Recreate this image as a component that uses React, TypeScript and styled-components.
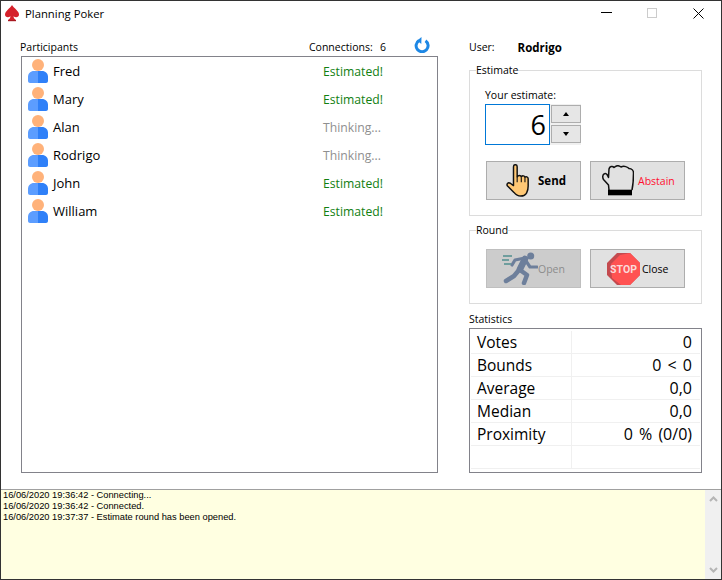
import React from "react";
import styled, { createGlobalStyle } from "styled-components";

const GlobalStyle = createGlobalStyle`
  html, body {
    margin: 0;
    padding: 0;
    background: #fff;
  }
  * {
    box-sizing: border-box;
  }
`;

const Window = styled.div`
  display: flex;
  flex-direction: column;
  width: 722px;
  height: 580px;
  overflow: hidden;
  background: #fff;
  border: 1px solid #333;
  color: #000;
  font-family: "Open Sans", "Noto Sans", sans-serif;
  font-size: 10.5px;
`;

const TitleBar = styled.div`
  display: flex;
  align-items: center;
  height: 24px;
  padding-left: 3px;
  flex-shrink: 0;
`;

const AppTitle = styled.span`
  margin-left: 5px;
  font-size: 11.3px;
  flex: 1;
`;

const WinButton = styled.div`
  display: flex;
  align-items: center;
  justify-content: center;
  width: 46px;
  height: 24px;
`;

const Main = styled.div`
  display: flex;
  flex: 1;
  min-height: 0;
  gap: 31px;
  padding: 13px 19px 16px 19px;
`;

const LeftColumn = styled.div`
  display: flex;
  flex-direction: column;
  width: 418px;
`;

const RightColumn = styled.div`
  display: flex;
  flex-direction: column;
  width: 233px;
`;

const HeaderRow = styled.div`
  display: flex;
  align-items: center;
  height: 18px;
  flex-shrink: 0;
`;

const Connections = styled.span`
  margin-left: auto;
  width: 71px;
`;

const ConnectionCount = styled.span`
  width: 34px;
`;

const RefreshSlot = styled.span`
  display: flex;
  width: 24px;
  margin-bottom: 4px;
`;

const ParticipantList = styled.div`
  flex: 1;
  margin-left: 1px;
  border: 1px solid #82828a;
`;

const ParticipantRow = styled.div`
  display: flex;
  align-items: center;
  height: 28px;
  padding-left: 6px;
  font-size: 13px;
`;

const Name = styled.span`
  width: 270px;
  margin-left: 5px;
`;

const Status = styled.span<{ $done: boolean }>`
  color: ${(p) => (p.$done ? "#118011" : "#8f8f8f")};
  font-size: 12.2px;
`;

const UserRow = styled(HeaderRow)`
  margin-bottom: 6px;
`;

const UserName = styled.span`
  margin-left: 23px;
  font-size: 11.5px;
  font-weight: 700;
`;

const Group = styled.fieldset<{ $height: number }>`
  height: ${(p) => p.$height}px;
  margin: 0 0 6px;
  padding: 0 15px;
  width: 233px;
  border: 1px solid #dcdcdc;
`;

const GroupLegend = styled.legend`
  padding: 0;
  margin-left: -9px;
  font-size: 10.5px;
  line-height: 16px;
`;

const EstimateLabel = styled.div`
  margin-top: 9px;
  line-height: 16px;
`;

const SpinRow = styled.div`
  display: flex;
  margin-top: 1px;
`;

const SpinInput = styled.div`
  display: flex;
  align-items: center;
  justify-content: flex-end;
  width: 65px;
  height: 41px;
  padding-right: 3px;
  border: 1px solid #0078d7;
  font-size: 27px;
`;

const SpinButtons = styled.div`
  display: flex;
  flex-direction: column;
  gap: 2px;
  padding: 1px 0 1px 1px;
  background: #f0f0f0;
`;

const SpinButton = styled.div`
  display: flex;
  align-items: center;
  justify-content: center;
  width: 30px;
  height: 18px;
  background: #e6e6e6;
  border: 1px solid #adadad;
`;

const ButtonRow = styled.div<{ $top: number }>`
  display: flex;
  gap: 9px;
  margin-top: ${(p) => p.$top}px;
  padding-left: 1px;
`;

const ActionButton = styled.div<{ $disabled?: boolean; $pad: number; $gap: number }>`
  display: flex;
  align-items: center;
  width: 95px;
  height: 39px;
  padding-left: ${(p) => p.$pad}px;
  gap: ${(p) => p.$gap}px;
  background: ${(p) => (p.$disabled ? "#cccccc" : "#e1e1e1")};
  border: 1px solid ${(p) => (p.$disabled ? "#bfbfbf" : "#adadad")};
`;

const ButtonText = styled.span<{ $color?: string; $bold?: boolean }>`
  color: ${(p) => p.$color ?? "#000"};
  font-weight: ${(p) => (p.$bold ? 700 : 400)};
  font-size: ${(p) => (p.$bold ? 11.5 : 10.5)}px;
`;

const StatsLabel = styled.div`
  line-height: 16px;
  margin: 1px 0;
`;

const StatsBox = styled.div`
  flex: 1;
  border: 1px solid #82828a;
  padding: 2px 1px 0;
`;

const StatRow = styled.div`
  display: grid;
  grid-template-columns: 101px 1fr;
  height: 23px;
  border-bottom: 1px solid #f0f0f0;
  font-size: 15.5px;
  line-height: 22px;
`;

const StatName = styled.span`
  padding-left: 6px;
  border-right: 1px solid #f0f0f0;
`;

const StatValue = styled.span`
  padding-right: 8px;
  text-align: right;
  font-size: 16px;
  word-spacing: 2px;
`;

const LogPanel = styled.div`
  display: flex;
  height: 90px;
  flex-shrink: 0;
  border-top: 1px solid #a0a0a0;
`;

const LogText = styled.div`
  flex: 1;
  padding: 0 2px;
  background: #ffffe1;
  font-family: "Liberation Sans", Arial, sans-serif;
  font-size: 9.3px;
  line-height: 11px;
`;

const ScrollBar = styled.div`
  display: flex;
  flex-direction: column;
  justify-content: space-between;
  align-items: center;
  width: 16px;
  padding: 6px 0;
  background: #f0f0f0;
`;

const Spade = () => (
  <svg width="16" height="18" viewBox="0 0 16 18">
    <path
      d="M8 1C6 4.500 1 7 1 10.500c0 2.500 3 3.800 5.500 1.800C6.300 14 5.500 15.300 4 16h8c-1.500-.7-2.300-2-2.500-3.700C12 14.300 15 13 15 10.500 15 7 10 4.500 8 1z"
      fill="#d5202a"
    />
    <rect x="4" y="16" width="8" height="1.200" fill="#a81820" />
  </svg>
);

const PersonIcon = () => (
  <svg width="20" height="24" viewBox="0 0 20 24">
    <circle cx="10" cy="6" r="6" fill="#ffb27a" />
    <path d="M10 12H6c-3.500 0-6 2.500-6 6v4c0 1 1 2 2 2h8z" fill="#5c9dff" />
    <path d="M10 12h4c3.500 0 6 2.500 6 6v4c0 1-1 2-2 2h-8z" fill="#2f80f8" />
  </svg>
);

const RefreshIcon = () => (
  <svg width="16" height="16" viewBox="0 0 16 16">
    <path
      d="M5 3.600A6 6 0 1 0 11.500 3.800"
      fill="none"
      stroke="#1e88e5"
      strokeWidth="3"
    />
    <path d="M7.500 0l-.2 7L3.200 3.400z" fill="#1e88e5" />
  </svg>
);

const PointingHand = () => (
  <svg width="26" height="33" viewBox="0 0 28 36">
    <path
      d="M8 3c0-3 4-3 4 0v11c1-2 4-2 4.500 0 1-1.500 3.500-1.500 4 .5 1-1 3.500-.8 3.500 1.500v8c0 5-1 6-2 8-1 1.800-3 3-6 3-3.500 0-5.500-1.500-7.500-4L1.500 24c-1.500-2 .5-4.500 3-3L8 23.500z"
      fill="#ffc875"
      stroke="#111"
      strokeWidth="1.600"
      strokeLinejoin="round"
    />
    <path d="M12 14v6M16.500 14.500v5.500M20.500 15v5" stroke="#111" strokeWidth="1.200" />
  </svg>
);

const GloveHand = () => (
  <svg width="32" height="31" viewBox="0 0 32 31">
    <path
      d="M7 25 6.500 20 1.500 14.500C.3 12.500.5 9.500 2.500 8.800 3.700 8.300 5 8.800 5.500 10.500L6.500 12.500 7 4C7.500 1.500 10.500.5 12 2.500 14 .5 17 .5 19 2 22 .5 26 2 27 3.500 30 3.500 31.500 6 31.500 8 31.500 14 31 20 30 25"
      fill="#e1e1e1"
      stroke="#111"
      strokeWidth="1.500"
      strokeLinejoin="round"
    />
    <rect x="6" y="24.700" width="24" height="5.600" fill="#000" />
  </svg>
);

const RunnerIcon = () => (
  <svg width="36" height="33" viewBox="0 0 36 33">
    <circle cx="28.700" cy="4" r="3.500" fill="#6d7f9b" />
    <g fill="none" stroke="#6d7f9b" strokeLinecap="round" strokeLinejoin="round">
      <path d="M23 7 18 17" strokeWidth="6.500" />
      <path d="M23 6 13 8 10 13" strokeWidth="3.200" />
      <path d="M24 9 28 15 35 15" strokeWidth="3.200" />
      <path d="M17 18 12 24 4 29" strokeWidth="4.500" />
      <path d="M18 18 25 23 22 31" strokeWidth="4.500" />
    </g>
    <path d="M1 4h9M0 8h7M2 12h7" stroke="#6f9e9e" strokeWidth="1.800" />
  </svg>
);

const StopIcon = () => (
  <svg width="33" height="32" viewBox="0 0 33 32">
    <path d="M10 0h13l10 10v12L23 32H10L0 22V10z" fill="#c44a4e" />
    <path d="M13 2 23 0l10 10v12L23 32h-9l-9-7-1-14z" fill="#ff5252" />
    <text
      x="16.500"
      y="20"
      textAnchor="middle"
      fontFamily="Roboto, sans-serif"
      fontWeight="700"
      fontSize="10.500"
      fill="#fbdada"
    >
      STOP
    </text>
  </svg>
);

const participants = [
  { name: "Fred", done: true },
  { name: "Mary", done: true },
  { name: "Alan", done: false },
  { name: "Rodrigo", done: false },
  { name: "John", done: true },
  { name: "William", done: true },
];

const stats = [
  ["Votes", "0"],
  ["Bounds", "0 < 0"],
  ["Average", "0,0"],
  ["Median", "0,0"],
  ["Proximity", "0 % (0/0)"],
  ["", ""],
];

export default function App() {
  return (
    <Window>
      <GlobalStyle />
      <TitleBar>
        <Spade />
        <AppTitle>Planning Poker</AppTitle>
        <WinButton>
          <svg width="11" height="2">
            <rect width="11" height="1" fill="#000" />
          </svg>
        </WinButton>
        <WinButton>
          <svg width="10" height="10">
            <rect x=".5" y=".5" width="9" height="9" fill="none" stroke="#ccc" />
          </svg>
        </WinButton>
        <WinButton>
          <svg width="11" height="11">
            <path d="M.5.5l10 10M10.500.5l-10 10" stroke="#000" fill="none" />
          </svg>
        </WinButton>
      </TitleBar>

      <Main>
        <LeftColumn>
          <HeaderRow>
            <span>Participants</span>
            <Connections>Connections:</Connections>
            <ConnectionCount>6</ConnectionCount>
            <RefreshSlot>
              <RefreshIcon />
            </RefreshSlot>
          </HeaderRow>
          <ParticipantList>
            {participants.map((p) => (
              <ParticipantRow key={p.name}>
                <PersonIcon />
                <Name>{p.name}</Name>
                <Status $done={p.done}>{p.done ? "Estimated!" : "Thinking..."}</Status>
              </ParticipantRow>
            ))}
          </ParticipantList>
        </LeftColumn>

        <RightColumn>
          <UserRow>
            <span>User:</span>
            <UserName>Rodrigo</UserName>
          </UserRow>

          <Group $height={154}>
            <GroupLegend>Estimate</GroupLegend>
            <EstimateLabel>Your estimate:</EstimateLabel>
            <SpinRow>
              <SpinInput>6</SpinInput>
              <SpinButtons>
                <SpinButton>
                  <svg width="6" height="4">
                    <path d="M3 0l3 4H0z" fill="#000" />
                  </svg>
                </SpinButton>
                <SpinButton>
                  <svg width="6" height="4">
                    <path d="M0 0h6L3 4z" fill="#000" />
                  </svg>
                </SpinButton>
              </SpinButtons>
            </SpinRow>
            <ButtonRow $top={16}>
              <ActionButton $pad={19} $gap={6}>
                <PointingHand />
                <ButtonText $bold>Send</ButtonText>
              </ActionButton>
              <ActionButton $pad={11} $gap={4}>
                <GloveHand />
                <ButtonText $color="#ff1030">Abstain</ButtonText>
              </ActionButton>
            </ButtonRow>
          </Group>

          <Group $height={82}>
            <GroupLegend>Round</GroupLegend>
            <ButtonRow $top={11}>
              <ActionButton $disabled $pad={15} $gap={0}>
                <RunnerIcon />
                <ButtonText $color="#8c8c8c">Open</ButtonText>
              </ActionButton>
              <ActionButton $pad={16} $gap={2}>
                <StopIcon />
                <ButtonText>Close</ButtonText>
              </ActionButton>
            </ButtonRow>
          </Group>

          <StatsLabel>Statistics</StatsLabel>
          <StatsBox>
            {stats.map(([label, value], i) => (
              <StatRow key={i}>
                <StatName>{label}</StatName>
                <StatValue>{value}</StatValue>
              </StatRow>
            ))}
          </StatsBox>
        </RightColumn>
      </Main>

      <LogPanel>
        <LogText>
          <div>16/06/2020 19:36:42 - Connecting...</div>
          <div>16/06/2020 19:36:42 - Connected.</div>
          <div>16/06/2020 19:37:37 - Estimate round has been opened.</div>
        </LogText>
        <ScrollBar>
          <svg width="9" height="6">
            <path d="M1 5l3.500-3.500L8 5" fill="none" stroke="#b5b5b5" strokeWidth="2" />
          </svg>
          <svg width="9" height="6">
            <path d="M1 1l3.500 3.500L8 1" fill="none" stroke="#b5b5b5" strokeWidth="2" />
          </svg>
        </ScrollBar>
      </LogPanel>
    </Window>
  );
}
